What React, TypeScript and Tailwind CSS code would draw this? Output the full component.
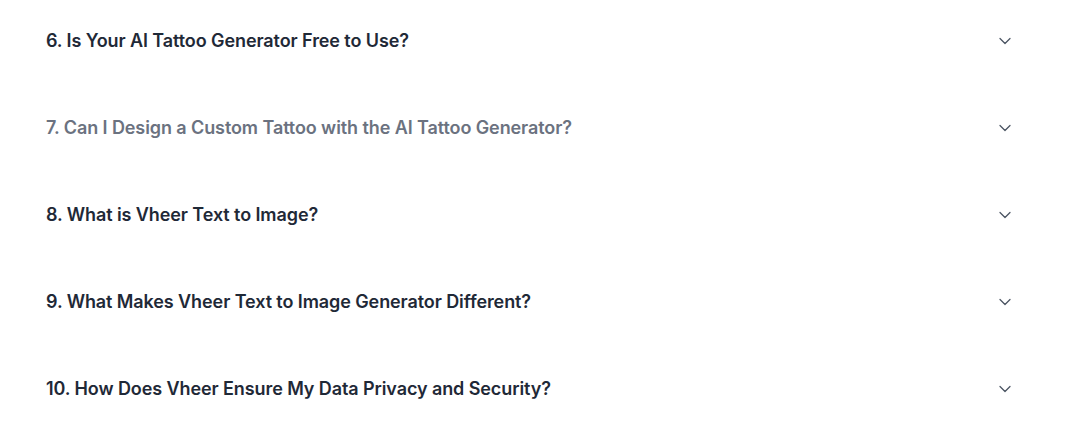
import * as React from 'react';
import { ChevronDown } from 'lucide-react';

const questions = [
  { q: '6. Is Your AI Tattoo Generator Free to Use?' },
  { q: '7. Can I Design a Custom Tattoo with the AI Tattoo Generator?', hover: true },
  { q: '8. What is Vheer Text to Image?' },
  { q: '9. What Makes Vheer Text to Image Generator Different?' },
  { q: '10. How Does Vheer Ensure My Data Privacy and Security?' },
];

function FaqRow({ q, hover }: { q: string; hover?: boolean }) {
  return (
    <button className="flex w-full items-center justify-between pt-[27px] pb-[32px] text-left">
      <h3
        className={
          'text-lg leading-7 font-semibold tracking-[-0.09px] ' +
          (hover ? 'text-[#6b7280]' : 'text-[#1f2937]')
        }
      >
        {q}
      </h3>
      <ChevronDown className="h-5 w-5 text-[#4b5563]" strokeWidth={1.5} />
    </button>
  );
}

export default function App() {
  return (
    <div className="min-h-[426px] w-full bg-white font-['Inter',sans-serif]">
      <div className="flex flex-col pl-[46px] pr-[65px]">
        {questions.map((item) => (
          <FaqRow key={item.q} q={item.q} hover={item.hover} />
        ))}
      </div>
    </div>
  );
}
